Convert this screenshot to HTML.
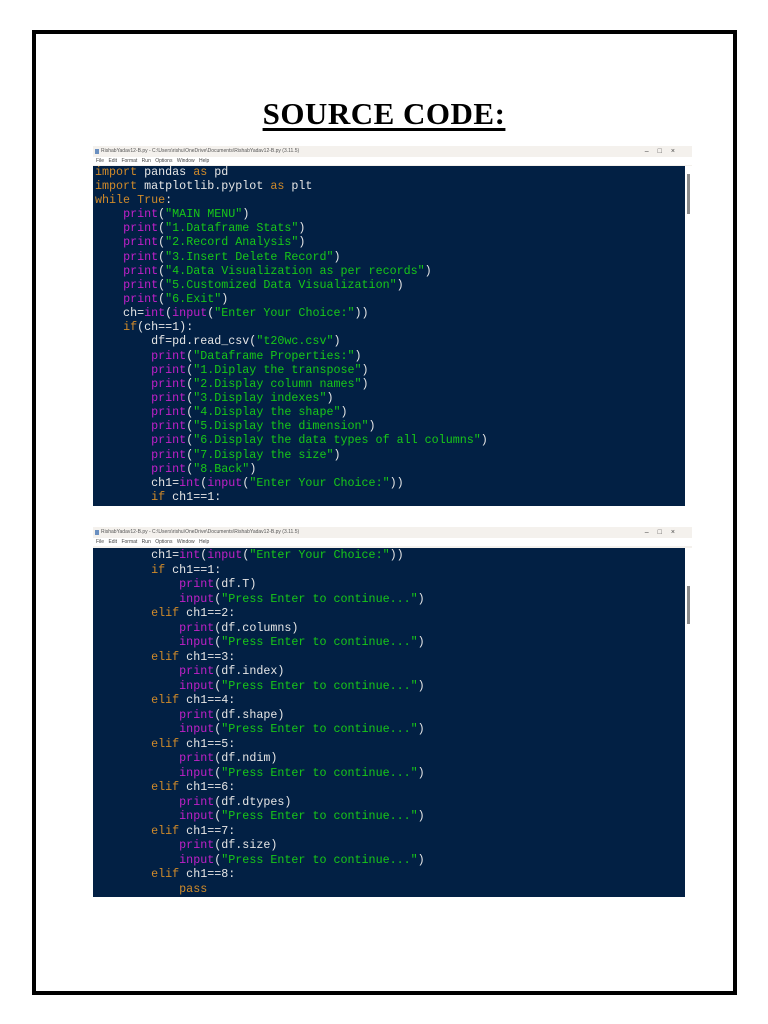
<!DOCTYPE html>
<html><head><meta charset="utf-8"><style>
*{margin:0;padding:0;box-sizing:border-box}
body{width:768px;height:1024px;background:#fff;position:relative;overflow:hidden;font-family:"Liberation Sans",sans-serif}
.frame{position:absolute;left:32px;top:30px;width:705px;height:965px;border:4px solid #000}
.title{position:absolute;left:0;width:768px;top:96px;text-align:center;font-family:"Liberation Serif",serif;font-weight:bold;font-size:31px;letter-spacing:0.5px;text-decoration:underline;text-decoration-thickness:3px;text-underline-offset:4px;color:#000}
.win{position:absolute;left:93px;width:599px;background:#f4f1ed}
.tb{height:11px;font-size:5px;color:#555;padding-left:8px;line-height:11px;position:relative}
.tb .ic{position:absolute;left:2px;top:3px;width:4px;height:5px;background:#6a8fc0}
.tb .ctl{position:absolute;right:8px;top:0;font-size:7px;color:#444;letter-spacing:9px}
.mb{height:8px;font-size:5px;color:#444;padding-left:3px;line-height:8px;background:#fff;word-spacing:3px}
.code{position:absolute;left:0;width:592px;background:#022044;overflow:hidden}
.sb{position:absolute;right:0;width:7px;background:#fff}
.thumb{position:absolute;left:2px;width:3px;background:#8a8a8a}
.ln{position:absolute;left:2px;font-family:"Liberation Mono",monospace;font-size:11.7px;color:#e6e6e6;white-space:pre;line-height:14px}
.k{color:#d08a2a}.b{color:#c020c8}.s{color:#18c818}
</style></head><body>
<div class="frame"></div>
<div class="title">SOURCE CODE:</div>

<div class="win" style="top:146px;height:360px">
<div class="tb"><span class="ic"></span>RishabYadav12-B.py - C:\Users\rishu\OneDrive\Documents\RishabYadav12-B.py (3.11.5)<span class="ctl">–□×</span></div>
<div class="mb">File Edit Format Run Options Window Help</div>
<div class="code" style="top:20px;height:340px">
<div class="ln" style="top:-1px"><span class="k">import</span> pandas <span class="k">as</span> pd</div>
<div class="ln" style="top:13px"><span class="k">import</span> matplotlib.pyplot <span class="k">as</span> plt</div>
<div class="ln" style="top:27px"><span class="k">while</span> <span class="k">True</span>:</div>
<div class="ln" style="top:41px">    <span class="b">print</span>(<span class="s">"MAIN MENU"</span>)</div>
<div class="ln" style="top:55px">    <span class="b">print</span>(<span class="s">"1.Dataframe Stats"</span>)</div>
<div class="ln" style="top:69px">    <span class="b">print</span>(<span class="s">"2.Record Analysis"</span>)</div>
<div class="ln" style="top:84px">    <span class="b">print</span>(<span class="s">"3.Insert Delete Record"</span>)</div>
<div class="ln" style="top:98px">    <span class="b">print</span>(<span class="s">"4.Data Visualization as per records"</span>)</div>
<div class="ln" style="top:112px">    <span class="b">print</span>(<span class="s">"5.Customized Data Visualization"</span>)</div>
<div class="ln" style="top:126px">    <span class="b">print</span>(<span class="s">"6.Exit"</span>)</div>
<div class="ln" style="top:140px">    ch=<span class="b">int</span>(<span class="b">input</span>(<span class="s">"Enter Your Choice:"</span>))</div>
<div class="ln" style="top:154px">    <span class="k">if</span>(ch==1):</div>
<div class="ln" style="top:168px">        df=pd.read_csv(<span class="s">"t20wc.csv"</span>)</div>
<div class="ln" style="top:183px">        <span class="b">print</span>(<span class="s">"Dataframe Properties:"</span>)</div>
<div class="ln" style="top:197px">        <span class="b">print</span>(<span class="s">"1.Diplay the transpose"</span>)</div>
<div class="ln" style="top:211px">        <span class="b">print</span>(<span class="s">"2.Display column names"</span>)</div>
<div class="ln" style="top:225px">        <span class="b">print</span>(<span class="s">"3.Display indexes"</span>)</div>
<div class="ln" style="top:239px">        <span class="b">print</span>(<span class="s">"4.Display the shape"</span>)</div>
<div class="ln" style="top:253px">        <span class="b">print</span>(<span class="s">"5.Display the dimension"</span>)</div>
<div class="ln" style="top:267px">        <span class="b">print</span>(<span class="s">"6.Display the data types of all columns"</span>)</div>
<div class="ln" style="top:282px">        <span class="b">print</span>(<span class="s">"7.Display the size"</span>)</div>
<div class="ln" style="top:296px">        <span class="b">print</span>(<span class="s">"8.Back"</span>)</div>
<div class="ln" style="top:310px">        ch1=<span class="b">int</span>(<span class="b">input</span>(<span class="s">"Enter Your Choice:"</span>))</div>
<div class="ln" style="top:324px">        <span class="k">if</span> ch1==1:</div>
</div>
<div class="sb" style="top:20px;height:340px"><div class="thumb" style="top:8px;height:40px"></div></div>
</div>

<div class="win" style="top:527px;height:370px">
<div class="tb"><span class="ic"></span>RishabYadav12-B.py - C:\Users\rishu\OneDrive\Documents\RishabYadav12-B.py (3.11.5)<span class="ctl">–□×</span></div>
<div class="mb">File Edit Format Run Options Window Help</div>
<div class="code" style="top:21px;height:349px">
<div class="ln" style="top:0px">        ch1=<span class="b">int</span>(<span class="b">input</span>(<span class="s">"Enter Your Choice:"</span>))</div>
<div class="ln" style="top:14.5px">        <span class="k">if</span> ch1==1:</div>
<div class="ln" style="top:29px">            <span class="b">print</span>(df.T)</div>
<div class="ln" style="top:43.5px">            <span class="b">input</span>(<span class="s">"Press Enter to continue..."</span>)</div>
<div class="ln" style="top:58px">        <span class="k">elif</span> ch1==2:</div>
<div class="ln" style="top:72.5px">            <span class="b">print</span>(df.columns)</div>
<div class="ln" style="top:87px">            <span class="b">input</span>(<span class="s">"Press Enter to continue..."</span>)</div>
<div class="ln" style="top:101.5px">        <span class="k">elif</span> ch1==3:</div>
<div class="ln" style="top:116px">            <span class="b">print</span>(df.index)</div>
<div class="ln" style="top:130.5px">            <span class="b">input</span>(<span class="s">"Press Enter to continue..."</span>)</div>
<div class="ln" style="top:145px">        <span class="k">elif</span> ch1==4:</div>
<div class="ln" style="top:159.5px">            <span class="b">print</span>(df.shape)</div>
<div class="ln" style="top:174px">            <span class="b">input</span>(<span class="s">"Press Enter to continue..."</span>)</div>
<div class="ln" style="top:188.5px">        <span class="k">elif</span> ch1==5:</div>
<div class="ln" style="top:203px">            <span class="b">print</span>(df.ndim)</div>
<div class="ln" style="top:217.5px">            <span class="b">input</span>(<span class="s">"Press Enter to continue..."</span>)</div>
<div class="ln" style="top:232px">        <span class="k">elif</span> ch1==6:</div>
<div class="ln" style="top:246.5px">            <span class="b">print</span>(df.dtypes)</div>
<div class="ln" style="top:261px">            <span class="b">input</span>(<span class="s">"Press Enter to continue..."</span>)</div>
<div class="ln" style="top:275.5px">        <span class="k">elif</span> ch1==7:</div>
<div class="ln" style="top:290px">            <span class="b">print</span>(df.size)</div>
<div class="ln" style="top:304.5px">            <span class="b">input</span>(<span class="s">"Press Enter to continue..."</span>)</div>
<div class="ln" style="top:319px">        <span class="k">elif</span> ch1==8:</div>
<div class="ln" style="top:333.5px">            <span class="k">pass</span></div>
</div>
<div class="sb" style="top:21px;height:349px"><div class="thumb" style="top:38px;height:38px"></div></div>
</div>
</body></html>
